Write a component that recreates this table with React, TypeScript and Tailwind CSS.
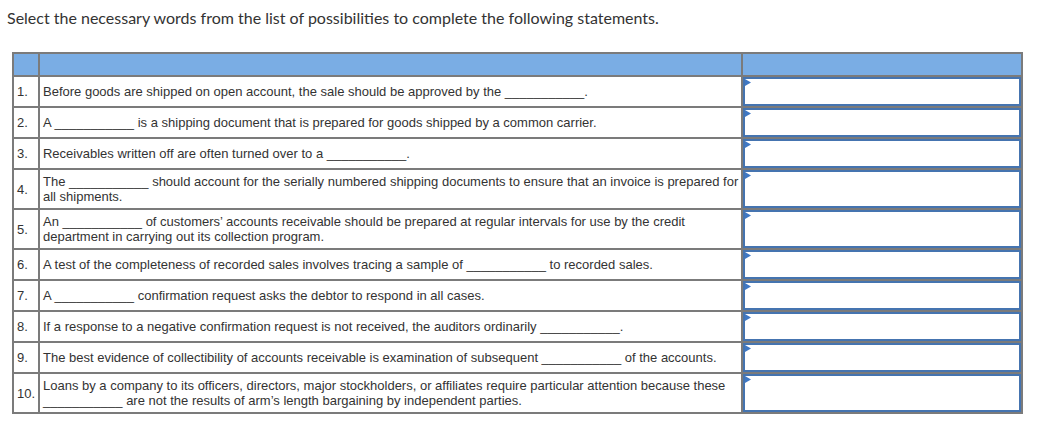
const rows: { n: string; h: string; text: React.ReactNode }[] = [
  {
    n: "1.",
    h: "h-[31px]",
    text: <>Before goods are shipped on open account, the sale should be approved by the ___________.</>,
  },
  {
    n: "2.",
    h: "h-[31px]",
    text: <>A ___________ is a shipping document that is prepared for goods shipped by a common carrier.</>,
  },
  {
    n: "3.",
    h: "h-[31px]",
    text: <>Receivables written off are often turned over to a ___________.</>,
  },
  {
    n: "4.",
    h: "h-[40px]",
    text: (
      <>
        The ___________ should account for the serially numbered shipping documents to ensure that an invoice is prepared for
        <br />
        all shipments.
      </>
    ),
  },
  {
    n: "5.",
    h: "h-[40px]",
    text: (
      <>
        An ___________ of customers’ accounts receivable should be prepared at regular intervals for use by the credit
        <br />
        department in carrying out its collection program.
      </>
    ),
  },
  {
    n: "6.",
    h: "h-[31px]",
    text: <>A test of the completeness of recorded sales involves tracing a sample of ___________ to recorded sales.</>,
  },
  {
    n: "7.",
    h: "h-[31px]",
    text: <>A ___________ confirmation request asks the debtor to respond in all cases.</>,
  },
  {
    n: "8.",
    h: "h-[31px]",
    text: <>If a response to a negative confirmation request is not received, the auditors ordinarily ___________.</>,
  },
  {
    n: "9.",
    h: "h-[31px]",
    text: <>The best evidence of collectibility of accounts receivable is examination of subsequent ___________ of the accounts.</>,
  },
  {
    n: "10.",
    h: "h-[40px]",
    text: (
      <>
        Loans by a company to its officers, directors, major stockholders, or affiliates require particular attention because these
        <br />
        ___________ are not the results of arm’s length bargaining by independent parties.
      </>
    ),
  },
];

const AnswerBox = () => (
  <div className="relative h-full border-2 border-[#4574b0] bg-white">
    <svg className="absolute left-0 top-0" width="6" height="7" viewBox="0 0 6 7">
      <path d="M0 0 L6 3.5 L0 7 Z" fill="#3f78c4" />
    </svg>
  </div>
);

export default function App() {
  return (
    <div className="min-h-screen bg-white pt-[7px] font-['Liberation_Sans',Arial,sans-serif]">
      <p className="pl-[7px] font-['Lato',sans-serif] text-[16px] leading-[21px] text-[#333]">
        Select the necessary words from the list of possibilities to complete the following statements.
      </p>
      <table className="ml-[12px] mt-[24px] w-[1011px] border-collapse text-[13px] leading-[15px] text-[#333]">
        <colgroup>
          <col className="w-[26px]" />
          <col className="w-[704px]" />
          <col className="w-[281px]" />
        </colgroup>
        <thead>
          <tr className="h-[23px] bg-[#7aade4]">
            <th className="border-2 border-[#7b7b7b]" />
            <th className="border-2 border-[#7b7b7b]" />
            <th className="border-2 border-[#7b7b7b]" />
          </tr>
        </thead>
        <tbody>
          {rows.map((r) => (
            <tr key={r.n} className={r.h}>
              <td className="border-2 border-[#7b7b7b] pl-[3px] align-middle">{r.n}</td>
              <td className="border-2 border-[#7b7b7b] pl-[3px] pr-[2px] align-middle">{r.text}</td>
              <td className="border-2 border-[#7b7b7b] p-0 align-middle">
                <div className={r.h === "h-[40px]" ? "h-[38px]" : "h-[29px]"}>
                  <AnswerBox />
                </div>
              </td>
            </tr>
          ))}
        </tbody>
      </table>
    </div>
  );
}
